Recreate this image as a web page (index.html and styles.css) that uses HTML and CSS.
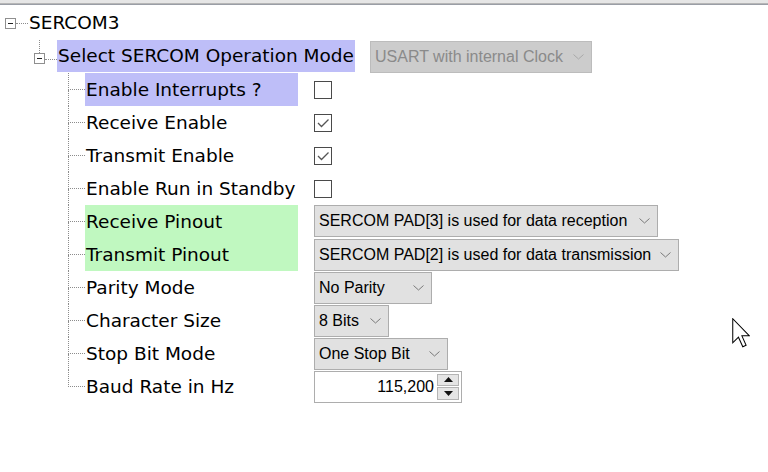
FILE: index.html
```html
<!DOCTYPE html>
<html>
<head>
<meta charset="utf-8">
<link rel="stylesheet" href="styles.css">
</head>
<body>
<div class="frame-top"></div>
<div class="tree">
  <div class="row root">
    <div class="handle"><div class="up"></div><div class="box"><span class="minus"></span></div></div>
    <div class="hconn"></div>
    <div class="label">SERCOM3</div>
  </div>
  <div class="row mode">
    <div class="handle"><div class="up line"></div><div class="box"><span class="minus"></span></div></div>
    <div class="hconn"></div>
    <div class="label hl-blue">Select SERCOM Operation Mode</div>
    <div class="combo disabled w-usart"><span class="ctext">USART with internal Clock</span><svg class="chev" width="11" height="6" viewBox="0 0 11 6"><polyline points="0.5,0.5 5.5,5 10.5,0.5"/></svg></div>
  </div>
  <div class="children">
    <div class="row child">
      <div class="conn"><div class="conn-top"></div><div class="conn-bot"></div></div>
      <div class="label item hl-blue">Enable Interrupts ?</div>
      <div class="ctrl"><span class="check"></span></div>
    </div>
    <div class="row child">
      <div class="conn"><div class="conn-top"></div><div class="conn-bot"></div></div>
      <div class="label item">Receive Enable</div>
      <div class="ctrl"><span class="check"><svg width="16" height="16" viewBox="0 0 16 16"><polyline points="3,8 6.5,11.5 13.5,4.5"/></svg></span></div>
    </div>
    <div class="row child">
      <div class="conn"><div class="conn-top"></div><div class="conn-bot"></div></div>
      <div class="label item">Transmit Enable</div>
      <div class="ctrl"><span class="check"><svg width="16" height="16" viewBox="0 0 16 16"><polyline points="3,8 6.5,11.5 13.5,4.5"/></svg></span></div>
    </div>
    <div class="row child">
      <div class="conn"><div class="conn-top"></div><div class="conn-bot"></div></div>
      <div class="label item">Enable Run in Standby</div>
      <div class="ctrl"><span class="check"></span></div>
    </div>
    <div class="row child">
      <div class="conn"><div class="conn-top"></div><div class="conn-bot"></div></div>
      <div class="label item hl-green">Receive Pinout</div>
      <div class="ctrl up1"><div class="combo w-rx"><span class="ctext">SERCOM PAD[3] is used for data reception</span><svg class="chev" width="11" height="6" viewBox="0 0 11 6"><polyline points="0.5,0.5 5.5,5 10.5,0.5"/></svg></div></div>
    </div>
    <div class="row child">
      <div class="conn"><div class="conn-top"></div><div class="conn-bot"></div></div>
      <div class="label item hl-green">Transmit Pinout</div>
      <div class="ctrl"><div class="combo w-tx"><span class="ctext">SERCOM PAD[2] is used for data transmission</span><svg class="chev" width="11" height="6" viewBox="0 0 11 6"><polyline points="0.5,0.5 5.5,5 10.5,0.5"/></svg></div></div>
    </div>
    <div class="row child">
      <div class="conn"><div class="conn-top"></div><div class="conn-bot"></div></div>
      <div class="label item">Parity Mode</div>
      <div class="ctrl"><div class="combo w-parity"><span class="ctext">No Parity</span><svg class="chev" width="11" height="6" viewBox="0 0 11 6"><polyline points="0.5,0.5 5.5,5 10.5,0.5"/></svg></div></div>
    </div>
    <div class="row child">
      <div class="conn"><div class="conn-top"></div><div class="conn-bot"></div></div>
      <div class="label item">Character Size</div>
      <div class="ctrl"><div class="combo w-char"><span class="ctext">8 Bits</span><svg class="chev" width="11" height="6" viewBox="0 0 11 6"><polyline points="0.5,0.5 5.5,5 10.5,0.5"/></svg></div></div>
    </div>
    <div class="row child">
      <div class="conn"><div class="conn-top"></div><div class="conn-bot"></div></div>
      <div class="label item">Stop Bit Mode</div>
      <div class="ctrl"><div class="combo w-stop"><span class="ctext">One Stop Bit</span><svg class="chev" width="11" height="6" viewBox="0 0 11 6"><polyline points="0.5,0.5 5.5,5 10.5,0.5"/></svg></div></div>
    </div>
    <div class="row child last">
      <div class="conn"><div class="conn-top"></div><div class="conn-bot"></div></div>
      <div class="label item">Baud Rate in Hz</div>
      <div class="ctrl">
        <div class="spinner">
          <span class="value">115,200</span>
          <div class="spin-btns">
            <span class="spin-btn"><svg width="9" height="5" viewBox="0 0 9 5"><polygon points="4.5,0 9,5 0,5"/></svg></span>
            <span class="spin-btn"><svg width="9" height="5" viewBox="0 0 9 5"><polygon points="0,0 9,0 4.5,5"/></svg></span>
          </div>
        </div>
      </div>
    </div>
  </div>
</div>
<svg class="cursor" width="18" height="30" viewBox="0 0 12 20"><path d="M0.5,0.5 L0.5,16.5 L4.3,12.8 L7.2,19.2 L9.4,18.2 L6.6,11.9 L11.6,11.9 Z"/></svg>
</body>
</html>
```

FILE: styles.css
```css
html, body {
  margin: 0;
  padding: 0;
  background: #ffffff;
  width: 768px;
  height: 472px;
  overflow: hidden;
}

body {
  font-family: "DejaVu Sans", Verdana, sans-serif;
  color: #000;
  position: relative;
}

.frame-top {
  height: 3px;
  background: #e6e6e6;
  border-bottom: 1px solid #b6b6b6;
  box-shadow: 0 1px 0 #9a9ea6;
  margin-bottom: 1px;
}

.tree {
  padding-top: 1px;
}

.row {
  display: flex;
  align-items: stretch;
  height: 33px;
}

.row.root {
  height: 34px;
}

.label {
  font-size: 18.5px;
  line-height: 33px;
  white-space: nowrap;
  padding: 0 1px;
}

.hl-blue {
  background: #bebef8;
}

.hl-green {
  background: #c0f8c0;
}

/* handles */
.handle {
  width: 11px;
  display: flex;
  flex-direction: column;
}

.up {
  height: 12px;
  width: 5px;
}

.up.line {
  border-right: 1px dotted #8c8c8c;
  height: 13px;
}

.box {
  width: 11px;
  height: 11px;
  box-sizing: border-box;
  border: 1px solid #8f8f8f;
  background: #fff;
  display: flex;
  align-items: center;
  justify-content: center;
}

.minus {
  width: 5px;
  height: 1px;
  background: #222;
}

.hconn {
  width: 12px;
  align-self: center;
  border-top: 1px dotted #8c8c8c;
  margin-top: 1px;
}

.root {
  padding-left: 5px;
}

.mode {
  padding-left: 34px;
}

.mode .hconn {
  margin-top: 5px;
}

.mode .label {
  height: 32px;
  line-height: 32px;
}

/* children */
.child {
  padding-left: 68px;
}

.conn {
  width: 17px;
  display: flex;
  flex-direction: column;
}

.conn-top {
  height: 17px;
  box-sizing: border-box;
  border-left: 1px dotted #8c8c8c;
  border-bottom: 1px dotted #8c8c8c;
}

.conn-bot {
  flex: 1;
  border-left: 1px dotted #8c8c8c;
}

.last .conn-bot {
  border-left: none;
}

.item {
  width: 213px;
  box-sizing: border-box;
}

.ctrl {
  margin-left: 16px;
  display: flex;
  align-items: center;
}

.ctrl.up1 {
  margin-top: -2px;
}

/* checkbox */
.check {
  width: 18px;
  height: 18px;
  box-sizing: border-box;
  border: 1px solid #4a4a4a;
  background: #fff;
  display: flex;
  align-items: center;
  justify-content: center;
  margin-top: 1px;
}

.check svg polyline {
  fill: none;
  stroke: #555;
  stroke-width: 1.3;
}

/* combo */
.combo {
  height: 32px;
  box-sizing: border-box;
  border: 1px solid #adadad;
  background: #e1e1e1;
  display: flex;
  align-items: center;
  padding: 0 7px 0 4px;
  font-family: "Liberation Sans", Arial, sans-serif;
  font-size: 16px;
  color: #000;
  white-space: nowrap;
}

.combo .chev {
  margin-left: auto;
  flex: none;
}

.chev polyline {
  fill: none;
  stroke: #7a7a7a;
  stroke-width: 1;
}

.combo.disabled {
  background: #cccccc;
  border-color: #bcbcbc;
  color: #8a8a8a;
  margin-left: 15px;
  align-self: center;
}

.combo.disabled .chev polyline {
  stroke: #a8a8a8;
}

.w-usart { width: 222px; }
.w-rx { width: 344px; }
.w-tx { width: 365px; }
.w-parity { width: 118px; }
.w-char { width: 75px; }
.w-stop { width: 134px; }

/* spinner */
.spinner {
  width: 148px;
  height: 32px;
  box-sizing: border-box;
  border: 1px solid #adadad;
  background: #fff;
  display: flex;
  align-items: stretch;
  font-family: "Liberation Sans", Arial, sans-serif;
  font-size: 16px;
}

.spinner .value {
  flex: 1;
  text-align: right;
  line-height: 30px;
  padding-right: 3px;
}

.spin-btns {
  width: 22px;
  display: flex;
  flex-direction: column;
  padding: 2px 2px 2px 0;
  gap: 1px;
}

.spin-btn {
  flex: 1;
  background: #e5e5e5;
  border: 1px solid #b4b4b4;
  display: flex;
  align-items: center;
  justify-content: center;
}

.spin-btn polygon {
  fill: #111;
}

/* mouse pointer over the canvas */
.cursor {
  position: absolute;
  left: 732px;
  top: 318px;
}

.cursor path {
  fill: #fff;
  stroke: #000;
  stroke-width: 0.68;
  stroke-linejoin: miter;
}
```
